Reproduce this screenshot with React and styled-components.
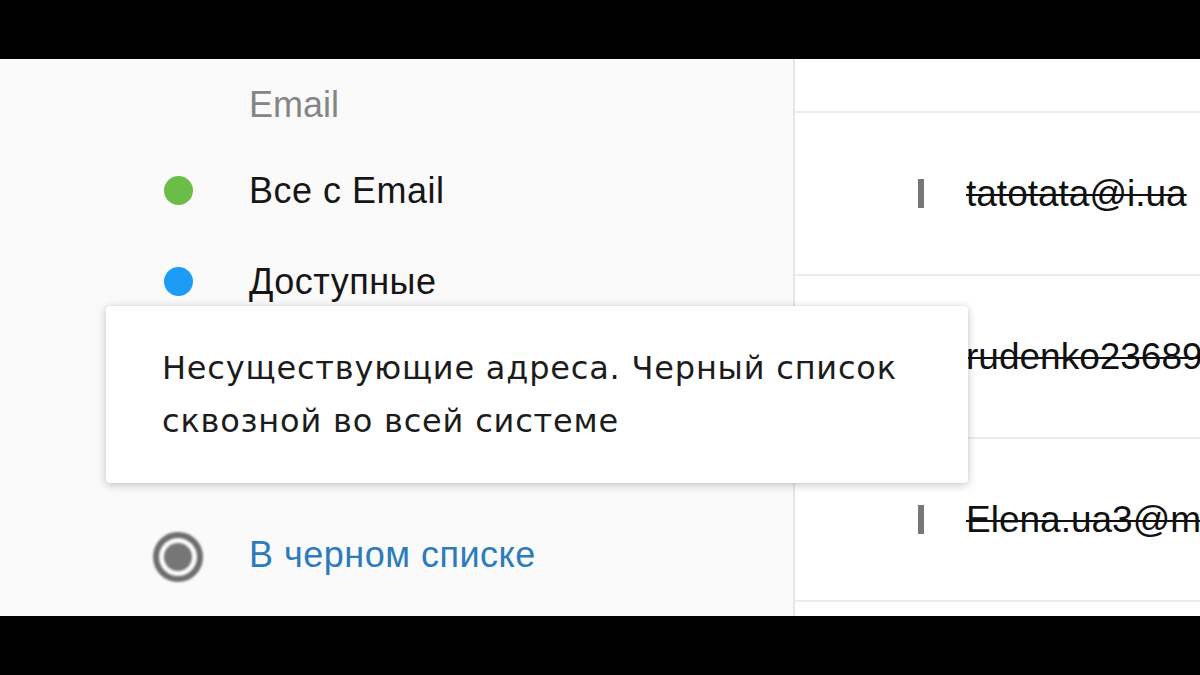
import React from "react";
import styled, { createGlobalStyle } from "styled-components";

const GlobalStyle = createGlobalStyle`
  html, body { margin: 0; padding: 0; background: #000; }
  body { font-family: "Liberation Sans", Arial, sans-serif; }
`;

const Page = styled.div`
  width: 1200px;
  height: 675px;
  display: flex;
  flex-direction: column;
  background: #000;
  overflow: hidden;
`;

const Letterbox = styled.div`
  height: 59px;
  flex: none;
  background: #000;
`;

const Content = styled.div`
  position: relative;
  height: 557px;
  flex: none;
  display: flex;
  overflow: hidden;
`;

const FilterPanel = styled.div`
  width: 795px;
  flex: none;
  background: #fafafa;
  border-right: 2px solid #e6e6e6;
  display: flex;
  flex-direction: column;
  padding-left: 153px;
  box-sizing: border-box;
`;

const GroupTitle = styled.div`
  height: 86px;
  padding-top: 5px;
  box-sizing: border-box;
  display: flex;
  align-items: center;
  padding-left: 96px;
  font-size: 36px;
  color: #858585;
`;

const FilterRow = styled.div`
  height: 91px;
  flex: none;
  display: flex;
  align-items: center;
  gap: 46px;
`;

const IconSlot = styled.div`
  width: 50px;
  height: 50px;
  flex: none;
  display: flex;
  align-items: center;
  justify-content: center;
`;

const Dot = styled.span`
  width: 29px;
  height: 29px;
  border-radius: 50%;
  background: ${(p) => p.$color};
  filter: blur(0.4px);
`;

const Radio = styled.span`
  width: 50px;
  height: 50px;
  margin-top: 4px;
  border-radius: 50%;
  border: 6px solid #6e6e6e;
  box-sizing: border-box;
  display: flex;
  align-items: center;
  justify-content: center;
  filter: blur(0.9px);
  &::after {
    content: "";
    width: 28px;
    height: 28px;
    border-radius: 50%;
    background: #767676;
  }
`;

const FilterLabel = styled.span`
  font-size: 36px;
  letter-spacing: 0.5px;
  color: ${(p) => (p.$active ? "#2b7bbd" : "#161616")};
  white-space: nowrap;
`;

const ListPanel = styled.div`
  flex: 1;
  background: #fff;
  display: flex;
  flex-direction: column;
  min-width: 0;
`;

const ListHead = styled.div`
  height: 52px;
  flex: none;
  border-bottom: 2px solid #ececec;
`;

const EmailRow = styled.div`
  height: 161px;
  flex: none;
  border-bottom: 2px solid #ececec;
  display: flex;
  align-items: center;
  padding-left: 123px;
  overflow: hidden;
`;

const Marker = styled.span`
  width: 6px;
  height: 29px;
  flex: none;
  background: #777;
`;

const Address = styled.span`
  margin-left: 42px;
  font-size: 37px;
  color: #111;
  text-decoration: line-through;
  text-decoration-thickness: 2px;
  white-space: nowrap;
`;

const Tooltip = styled.div`
  position: absolute;
  left: 106px;
  top: 247px;
  width: 862px;
  height: 177px;
  box-sizing: border-box;
  padding: 36px 56px 0;
  background: #fff;
  border-radius: 4px;
  box-shadow: 0 2px 10px rgba(0, 0, 0, 0.22), 0 0 2px rgba(0, 0, 0, 0.08);
  font-family: "DejaVu Sans", Verdana, sans-serif;
  font-size: 32px;
  letter-spacing: 0.8px;
  line-height: 53px;
  color: #1c1c1c;
`;

const filters = [
  { label: "Все с Email", color: "#6abd47" },
  { label: "Доступные", color: "#1d9cf6" },
  { label: "Недоступные", color: "#e9473f" },
  { label: "Неизвестные", color: "#bdbdbd" },
  { label: "В черном списке", radio: true, active: true },
];

const emails = ["tatotata@i.ua", "rudenko23689@gmail.com", "Elena.ua3@meta.ua", ""];

export default function App() {
  return (
    <>
      <GlobalStyle />
      <Page>
        <Letterbox />
        <Content>
          <FilterPanel>
            <GroupTitle>Email</GroupTitle>
            {filters.map((f) => (
              <FilterRow key={f.label}>
                <IconSlot>{f.radio ? <Radio /> : <Dot $color={f.color} />}</IconSlot>
                <FilterLabel $active={f.active}>{f.label}</FilterLabel>
              </FilterRow>
            ))}
          </FilterPanel>
          <ListPanel>
            <ListHead />
            {emails.map((e, i) => (
              <EmailRow key={i}>
                <Marker />
                <Address>{e}</Address>
              </EmailRow>
            ))}
          </ListPanel>
          <Tooltip>
            Несуществующие адреса. Черный список
            <br />
            сквозной во всей системе
          </Tooltip>
        </Content>
        <Letterbox />
      </Page>
    </>
  );
}
